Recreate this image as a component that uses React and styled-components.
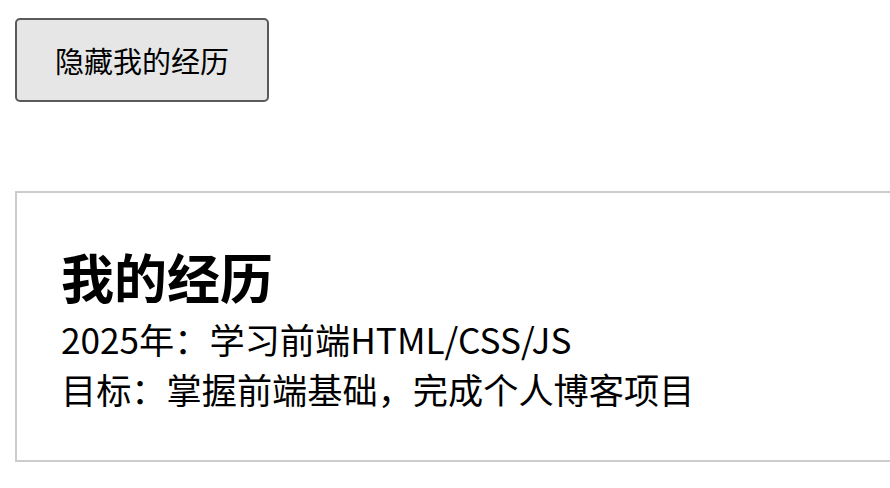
import React, { useState } from "react";
import styled, { createGlobalStyle } from "styled-components";

const Global = createGlobalStyle`
  html, body { margin: 0; padding: 0; overflow: hidden; background: #fff; }
  body { font-family: "Noto Sans CJK SC", "Noto Sans", sans-serif; color: #000; }
`;

const Page = styled.div`
  display: flex;
  flex-direction: column;
  align-items: flex-start;
  padding: 18px 0 0 15px;
  gap: 89px;
`;

const ToggleButton = styled.button`
  font-family: "Noto Sans CJK SC", "Noto Sans", sans-serif;
  font-size: 29px;
  line-height: 42px;
  color: #000;
  background: #e6e6e6;
  border: 2px solid #5a5a5a;
  border-radius: 5px;
  padding: 19px 38px;
  cursor: pointer;
`;

const Card = styled.section`
  width: 1000px;
  border: 2px solid #cccccc;
  padding: 46px 44px 46px 44px;
`;

const Title = styled.h2`
  margin: 0;
  font-size: 53px;
  font-weight: 700;
  line-height: 75px;
`;

const Line = styled.p`
  margin: 0;
  font-size: 35.2px;
  line-height: 50px;
`;

export default function App() {
  const [shown, setShown] = useState(true);
  return (
    <>
      <Global />
      <Page>
        <ToggleButton onClick={() => setShown((s) => !s)}>
          {shown ? "隐藏我的经历" : "显示我的经历"}
        </ToggleButton>
        {shown && (
          <Card>
            <Title>我的经历</Title>
            <Line>2025年：学习前端HTML/CSS/JS</Line>
            <Line>目标：掌握前端基础，完成个人博客项目</Line>
          </Card>
        )}
      </Page>
    </>
  );
}
